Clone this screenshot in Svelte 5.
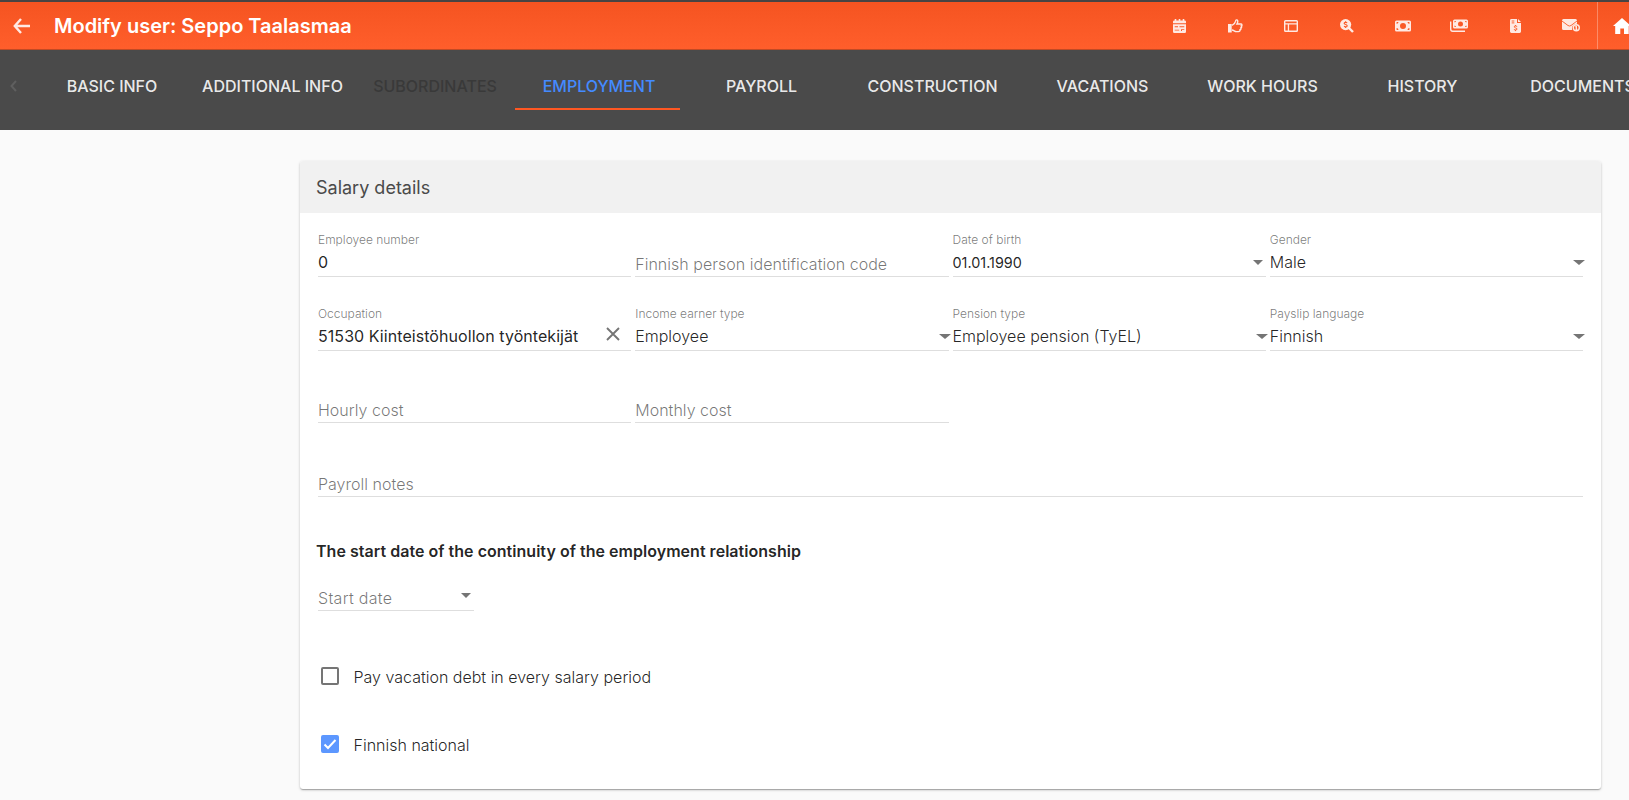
<script>
	const tabs = [
		{ label: 'Basic info', width: 156 },
		{ label: 'Additional info', width: 165 },
		{ label: 'Subordinates', width: 160, disabled: true },
		{ label: 'Employment', width: 165 },
		{ label: 'Payroll', width: 165 },
		{ label: 'Construction', width: 175 },
		{ label: 'Vacations', width: 165 },
		{ label: 'Work hours', width: 155 },
		{ label: 'History', width: 165 },
		{ label: 'Documents', width: 155 }
	];

	let active = $state('Employment');
	let payDebt = $state(false);
	let national = $state(true);

	const rows = [
		[
			{ label: 'Employee number', value: '0', kind: 'input' },
			{ label: 'Finnish person identification code', kind: 'input' },
			{ label: 'Date of birth', value: '01.01.1990', kind: 'date' },
			{ label: 'Gender', value: 'Male', kind: 'select' }
		],
		[
			{ label: 'Occupation', value: '51530 Kiinteistöhuollon työntekijät', kind: 'clear' },
			{ label: 'Income earner type', value: 'Employee', kind: 'select' },
			{ label: 'Pension type', value: 'Employee pension (TyEL)', kind: 'select' },
			{ label: 'Payslip language', value: 'Finnish', kind: 'select' }
		],
		[
			{ label: 'Hourly cost', kind: 'input' },
			{ label: 'Monthly cost', kind: 'input' }
		]
	];
</script>

<div class="page">
	<header class="toolbar">
		<button class="back" aria-label="Back">
			<svg width="18" height="16" viewBox="0 0 18 16"><path d="M8 1L1.800 8 8 15M2 8h15" /></svg>
		</button>
		<h1>Modify user: Seppo Taalasmaa</h1>

		<nav class="actions">
			<button aria-label="Calendar">
				<svg width="13" height="14" viewBox="0 0 13 14">
					<path fill-rule="evenodd" d="M1.700 0h1.600v1.500h2.400V0h1.600v1.500h2.400V0h1.600v1.500h.4Q13 1.500 13 2.700V4.200H0V2.700Q0 1.500 1.300 1.500h.4ZM0 5.300h13v7.500q0 1.200-1.200 1.200H1.200Q0 14 0 12.800ZM1.700 7.300v.9h3.300v-.9ZM6.500 7.300v.9h4.800v-.9ZM1.700 10.700v.9h4.500v-.9ZM8 10.200v1.900h1v-1h2.300v-.9Z" />
				</svg>
			</button>
			<button aria-label="Approve">
				<svg width="15" height="14" viewBox="0 0 15 14">
					<path d="M0 5h3.700v8.500H0Z" />
					<path class="line" d="M4 6.300C6 5.500 7.200 4 7.600 2.200 7.800 1 8.300.7 9 .9 10.200 1.300 9.900 3.300 8.900 5h3.900c1.400 0 1.500 1.700.5 2 .7.700.3 1.800-.5 2 .4.800 0 1.600-.8 1.800.2 1-.4 1.800-1.600 1.800H8.500C6.500 12.600 6 11.200 4 11" />
				</svg>
			</button>
			<button aria-label="Layout">
				<svg width="14" height="12" viewBox="0 0 14 12">
					<path fill-rule="evenodd" d="M1.500 0h11Q14 0 14 1.500v9q0 1.500-1.500 1.500h-11Q0 12 0 10.500v-9Q0 0 1.500 0ZM1.400 1.600v1.700h11.200V1.600ZM1.400 4.600v6h2.400v-6ZM5.100 4.600v6h7.500v-6Z" />
				</svg>
			</button>
			<button aria-label="Search salaries">
				<svg width="14" height="14" viewBox="0 0 14 14">
					<circle cx="5.600" cy="5.600" r="5.600" />
					<path class="handle" d="M9 9l4 4" />
					<path class="cut" d="M7.200 3.800Q5.600 2.900 4.400 3.700 3.700 4.900 5.600 5.500 7.700 6.100 6.900 7.400 5.700 8.200 4 7.300M5.600 2.200v1M5.600 7.800v1.200" />
				</svg>
			</button>
			<button aria-label="Pay">
				<svg width="16" height="12" viewBox="0 0 16 12">
					<path fill-rule="evenodd" d="M1.500.5h13Q16 .5 16 2v8q0 1.500-1.500 1.500h-13Q0 11.500 0 10V2Q0 .5 1.500.5ZM8 3a3 3 0 1 0 0 6 3 3 0 0 0 0-6ZM1.600 2.100v1.900Q3.400 3.800 3.500 2.100ZM14.400 2.100h-1.900q.1 1.700 1.900 1.900ZM1.600 9.900h1.900Q3.400 8.200 1.600 8ZM14.400 9.900V8q-1.800.2-1.900 1.900Z" />
				</svg>
			</button>
			<button aria-label="Payments">
				<svg width="18" height="13" viewBox="0 0 18 13">
					<path fill-rule="evenodd" d="M4.500.5h12Q18 .5 18 2v6q0 1.500-1.500 1.500h-12Q3 9.500 3 8V2Q3 .5 4.500.5ZM10.500 2.500a2.500 2.500 0 1 0 0 5 2.500 2.500 0 0 0 0-5ZM4.500 1.900v1.600Q5.900 3.300 6 1.900ZM16.500 1.900H15q.1 1.400 1.500 1.600ZM4.500 8.100H6Q5.900 6.700 4.500 6.500ZM16.500 8.100V6.500q-1.400.2-1.500 1.600Z" />
					<path class="line" d="M.7 2.500v7.600q0 2.200 2 2.200H15" />
				</svg>
			</button>
			<button aria-label="Invoice">
				<svg width="11" height="14" viewBox="0 0 11 14">
					<path d="M1.500 0H7v4h4v8.600Q11 14 9.600 14H1.400Q0 14 0 12.600V1.400Q0 0 1.500 0ZM8 0l3 3H8Z" />
					<path class="cut thin" d="M1.700 2h2.600M1.700 3.900h2.600M7.200 7.500Q5.600 6.500 4.400 7.200 3.700 8.300 5.500 8.900 7.600 9.400 6.900 10.600 5.700 11.300 3.900 10.600M5.500 6v1M5.500 11v1.100" />
				</svg>
			</button>
			<button aria-label="Messages">
				<svg width="18" height="13" viewBox="0 0 18 13">
					<path d="M1.500 0h12Q15 0 15 1.500V4.700Q10 5 10 9.500q0 .9.300 1.500H1.500Q0 11 0 9.500v-8Q0 0 1.500 0Z" />
					<path class="cut thin" d="M0 2l6 4.500q1.500 1 3 0L15 2" />
					<circle class="line" cx="14.300" cy="8.700" r="3" />
					<path class="line" d="M13.300 7.500h1v3M13.500 10.400h1.800" />
				</svg>
			</button>
		</nav>
		<button class="home" aria-label="Home">
			<svg width="18" height="16" viewBox="0 0 18 16"><path d="M9 0l9 8h-2.300v8H11v-5.500H7.300V16H2.200V8H0Z" /></svg>
		</button>
	</header>

	<nav class="tabs">
		<svg class="prev" width="7" height="12" viewBox="0 0 7 12"><path d="M6 1L1.500 6 6 11" /></svg>
		{#each tabs as tab}
			<button
				class="tab"
				class:active={active === tab.label}
				disabled={tab.disabled}
				style="width: {tab.width}px"
				onclick={() => (active = tab.label)}
			>
				{tab.label}
			</button>
		{/each}
	</nav>

	<main class="card">
		<h2>Salary details</h2>
		<div class="body">
			{#each rows as row}
				<div class="row">
					{#each row as f}
						<div class="field {f.kind}">
							{#if f.value}
								<span class="label">{f.label}</span>
								<span class="value">{f.value}</span>
								{#if f.kind === 'select' || f.kind === 'date'}
									<i class="caret"></i>
								{:else if f.kind === 'clear'}
									<svg class="x" width="14" height="14" viewBox="0 0 14 14"><path d="M1 1l12 12M13 1L1 13" /></svg>
								{/if}
							{:else}
								<span class="placeholder">{f.label}</span>
							{/if}
						</div>
					{/each}
				</div>
			{/each}
			<div class="row full">
				<div class="field"><span class="placeholder">Payroll notes</span></div>
			</div>

			<h3>The start date of the continuity of the employment relationship</h3>
			<div class="field start date">
				<span class="placeholder">Start date</span>
				<i class="caret"></i>
			</div>

			<label class="check">
				<input type="checkbox" bind:checked={payDebt} />
				<span class="box"></span>
				Pay vacation debt in every salary period
			</label>
			<label class="check">
				<input type="checkbox" bind:checked={national} />
				<span class="box">
					<svg width="18" height="18" viewBox="0 0 18 18"><path d="M3.500 9.500L7 13l7.500-8" /></svg>
				</span>
				Finnish national
			</label>
		</div>
	</main>
</div>

<style>
	:global(body) { background: #fafafa; }
	.page {
		height: 800px; overflow: hidden;
		font-family: Inter, sans-serif; font-size: 16px; font-weight: 300;
		color: rgba(0, 0, 0, 0.87);
	}
	button { border: 0; padding: 0; background: none; color: inherit; font: inherit; cursor: pointer; }
	h1, h2, h3 { margin: 0; }

	.toolbar {
		box-sizing: border-box; display: flex; align-items: stretch; height: 50px;
		border-top: 2px solid #474443; border-bottom: 1px solid #c14a24;
		background: linear-gradient(#f55421, #ff5e2b);
		color: #fff;
	}
	.toolbar svg { display: block; fill: currentColor; }
	.back { width: 54px; padding-left: 13px; }
	.back svg { fill: none; stroke: rgba(255, 255, 255, 0.87); stroke-width: 2.4; }
	h1 { flex: 1; font-size: 20px; font-weight: 600; line-height: 49px; white-space: nowrap; }
	.actions { display: flex; color: rgba(255, 255, 255, 0.87); }
	.actions button { display: grid; place-items: center; width: 56px; }
	.actions .line { fill: none; stroke: currentColor; stroke-width: 1.4; }
	.actions .handle { stroke: currentColor; stroke-width: 2.4; }
	.actions .cut { fill: none; stroke: #fa5926; stroke-width: 1.2; }
	.actions .thin { stroke-width: 0.9; }
	.home { width: 32px; margin-left: -2px; border-left: 1px solid rgba(255, 255, 255, 0.3); padding-left: 15px; overflow: hidden; }

	.tabs {
		display: flex; align-items: flex-start; height: 80px; overflow: hidden;
		background: #4a4a4a; color: rgba(255, 255, 255, 0.9);
	}
	.prev { flex: none; width: 7px; margin: 30px 17px 0 10px; fill: none; stroke: #5f5f5f; stroke-width: 2; }
	.tab {
		box-sizing: border-box; flex: none; height: 60px; padding-top: 14px;
		border-bottom: 2px solid transparent;
		font-weight: 500; text-transform: uppercase; white-space: nowrap;
	}
	.tab.active { padding-left: 3px; color: #448aff; border-color: #ff5722; }
	.tab.active + .tab { padding-right: 2px; }
	.tab:disabled { color: #393939; cursor: default; }

	.card {
		width: 1301px; height: 628px; margin: 31px 0 0 300px; border-radius: 3px; overflow: hidden;
		background: #fff; box-shadow: 0 1px 3px rgba(0, 0, 0, 0.2), 0 1px 1px rgba(0, 0, 0, 0.14), 0 2px 1px -1px rgba(0, 0, 0, 0.12);
	}
	h2 {
		height: 52px; padding-left: 16px; background: #f1f1f1; color: #4a4a4a;
		font-size: 18px; font-weight: 400; line-height: 54px; letter-spacing: 0;
	}
	.body { padding: 19px 16px 0; }
	.row { display: grid; grid-template-columns: repeat(4, 1fr); height: 74px; }
	.row:nth-child(2) { height: 72px; }
	.row.full { grid-template-columns: 1fr; }

	.field {
		position: relative; box-sizing: border-box; display: flex; flex-direction: column;
		height: 45px; margin: 0 2px; border-bottom: 1px solid #dedede; white-space: nowrap;
	}
	.label { font-size: 12px; line-height: 16px; color: rgba(0, 0, 0, 0.54); }
	.value { margin-top: 4px; line-height: 20px; }
	.placeholder { margin-top: 22px; line-height: 20px; letter-spacing: 0.02px; color: rgba(0, 0, 0, 0.54); }
	.input .value, .clear .value { font-weight: 400; letter-spacing: 0.06px; }
	.date .value { margin-top: 5px; font-size: 14.4px; font-weight: 400; }
	.caret {
		position: absolute; right: -2px; top: 28px;
		border: solid transparent; border-width: 5px 6px 0; border-top-color: #757575;
	}
	.date .caret { right: 3px; border-width: 5px 5px 0; top: 28px; }
	.x { position: absolute; right: 11px; top: 21px; fill: none; stroke: #757575; stroke-width: 1.9; }

	h3 { margin-top: 15px; font-size: 16px; font-weight: 600; line-height: 20px; letter-spacing: 0.03px; }
	.start { width: 156px; margin-top: 5px; }
	.start .placeholder { letter-spacing: 0.3px; }
	.start .caret { top: 27px; }

	.check { display: flex; align-items: center; gap: 14.5px; height: 20px; margin: 56px 0 0 5px; }
	.check + .check { margin-top: 48px; }
	input { position: absolute; opacity: 0; }
	.box { box-sizing: border-box; width: 18px; height: 18px; border: 2px solid #757575; border-radius: 2px; margin-top: -2px; }
	.box svg { display: none; margin: -2px; fill: none; stroke: #fff; stroke-width: 2; }
	input:checked + .box { background: #5c97ff; border-color: #5c97ff; }
	input:checked + .box svg { display: block; }
</style>
